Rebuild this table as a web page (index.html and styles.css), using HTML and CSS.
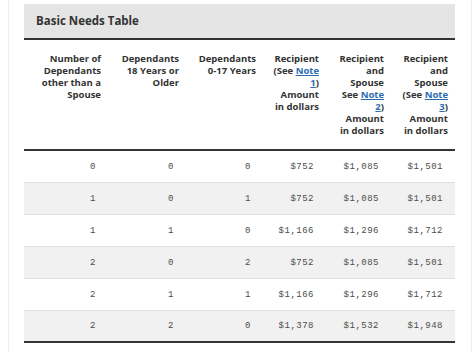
FILE: index.html
```html
<!DOCTYPE html>
<html lang="en">
<head>
  <meta charset="UTF-8">
  <title>Basic Needs Table</title>
  <meta name="viewport" content="width=device-width, initial-scale=1.0">
  <link rel="stylesheet" href="styles.css">
</head>
<body>
  <main class="page">
    <div class="table-box">
      <h2 class="table-title">Basic Needs Table</h2>
      <table class="needs">
        <colgroup>
          <col class="c1"><col class="c2"><col class="c3"><col class="c4"><col class="c5"><col class="c6">
        </colgroup>
        <thead>
          <tr>
            <th>Number of Dependants other than a Spouse</th>
            <th>Dependants 18 Years or Older</th>
            <th>Dependants 0-17 Years</th>
            <th>Recipient (See <a href="#note1">Note 1</a>)<br>Amount<br>in dollars</th>
            <th>Recipient and Spouse See <a href="#note2">Note 2</a>)<br>Amount<br>in dollars</th>
            <th>Recipient and Spouse (See <a href="#note3">Note 3</a>)<br>Amount<br>in dollars</th>
          </tr>
        </thead>
        <tbody>
          <tr><td>0</td><td>0</td><td>0</td><td>$752</td><td>$1,085</td><td>$1,501</td></tr>
          <tr><td>1</td><td>0</td><td>1</td><td>$752</td><td>$1,085</td><td>$1,501</td></tr>
          <tr><td>1</td><td>1</td><td>0</td><td>$1,166</td><td>$1,296</td><td>$1,712</td></tr>
          <tr><td>2</td><td>0</td><td>2</td><td>$752</td><td>$1,085</td><td>$1,501</td></tr>
          <tr><td>2</td><td>1</td><td>1</td><td>$1,166</td><td>$1,296</td><td>$1,712</td></tr>
          <tr><td>2</td><td>2</td><td>0</td><td>$1,378</td><td>$1,532</td><td>$1,948</td></tr>
        </tbody>
      </table>
    </div>
  </main>
</body>
</html>
```

FILE: styles.css
```css
:root {
  --ink: #333;
  --muted: #4d4d4d;
  --band: #e5e5e5;
  --stripe: #f1f1f1;
  --rule: #dedede;
  --link: #2b6cb4;
}

html, body {
  margin: 0;
  padding: 0;
  background: white;
}

body {
  font-family: "Open Sans", sans-serif;
  color: var(--ink);
}

.page {
  margin: 0 2px 0 8px;
  border-left: 1px solid #eee;
  border-right: 1px solid #eee;
  padding: 4px 16px 0 15px;
  min-height: 352px;
  box-sizing: border-box;
}

.table-title {
  margin: 0;
  background: var(--band);
  height: 34px;
  line-height: 34px;
  padding-left: 12px;
  font-size: 11.5px;
  font-weight: 700;
  border-bottom: 2px solid var(--ink);
}

.needs {
  width: 100%;
  table-layout: fixed;
  border-collapse: separate;
  border-spacing: 0;
}

.c1 { width: 84px; }
.c2 { width: 78px; }
.c3 { width: 77px; }
.c4 { width: 63px; }
.c5 { width: 65px; }
.c6 { width: 64px; }

.needs th {
  vertical-align: top;
  text-align: right;
  font-size: 9.5px;
  line-height: 12px;
  font-weight: 700;
  padding: 13px 7px 12px 8px;
}

.needs th a {
  color: var(--link);
}

.needs td {
  height: 31px;
  padding: 0 12px 0 0;
  text-align: right;
  font-family: "Liberation Mono", monospace;
  font-size: 9px;
  letter-spacing: 0.5px;
  color: var(--muted);
  border-bottom: 1px solid var(--rule);
}

.needs tbody tr:first-child td {
  border-top: 2px solid var(--ink);
}

.needs tbody tr:nth-child(even) td {
  background: var(--stripe);
}

.needs tbody tr:last-child td {
  height: 30px;
  border-bottom: 2px solid var(--ink);
}
```
